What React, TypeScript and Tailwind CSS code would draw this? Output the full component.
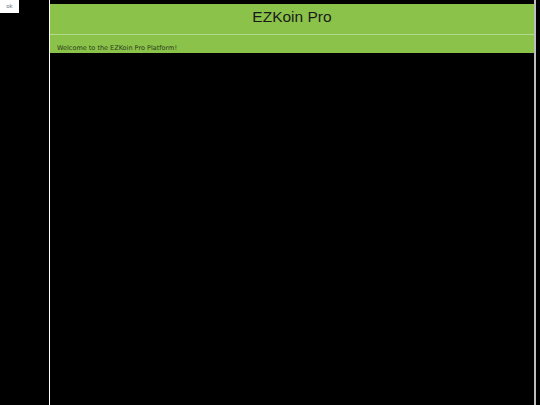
import React from 'react';

const App: React.FC = () => {
    return (
        <div className="flex h-[405px] w-[540px] bg-black overflow-hidden">
            <div className="w-[49px] shrink-0">
                <div className="w-[19px] h-[13px] bg-white flex items-center justify-center">
                    <span className="text-[5.5px] text-gray-500 font-['DejaVu_Sans',sans-serif]">ok</span>
                </div>
            </div>

            <div className="w-[487px] shrink-0 border-l border-white border-r-2 border-r-[#bdbdbd] pt-[4px]">
                <div className="bg-[#8bc34a]">
                    <div className="h-[31px] flex items-start justify-center border-b border-[#b3d98a]">
                        <h1 className="mt-[4px] text-[15.5px] leading-[18px] text-[#1a1a1a] font-['Liberation_Sans',Arial,sans-serif]">
                            EZKoin Pro
                        </h1>
                    </div>
                    <div className="h-[18px] pl-[7px] pt-[9px]">
                        <p className="text-[6.5px] leading-[8px] text-[#2a3a1a] font-['DejaVu_Sans',sans-serif]">
                            Welcome to the EZKoin Pro Platform!
                        </p>
                    </div>
                </div>
            </div>
        </div>
    );
};

export default App;
